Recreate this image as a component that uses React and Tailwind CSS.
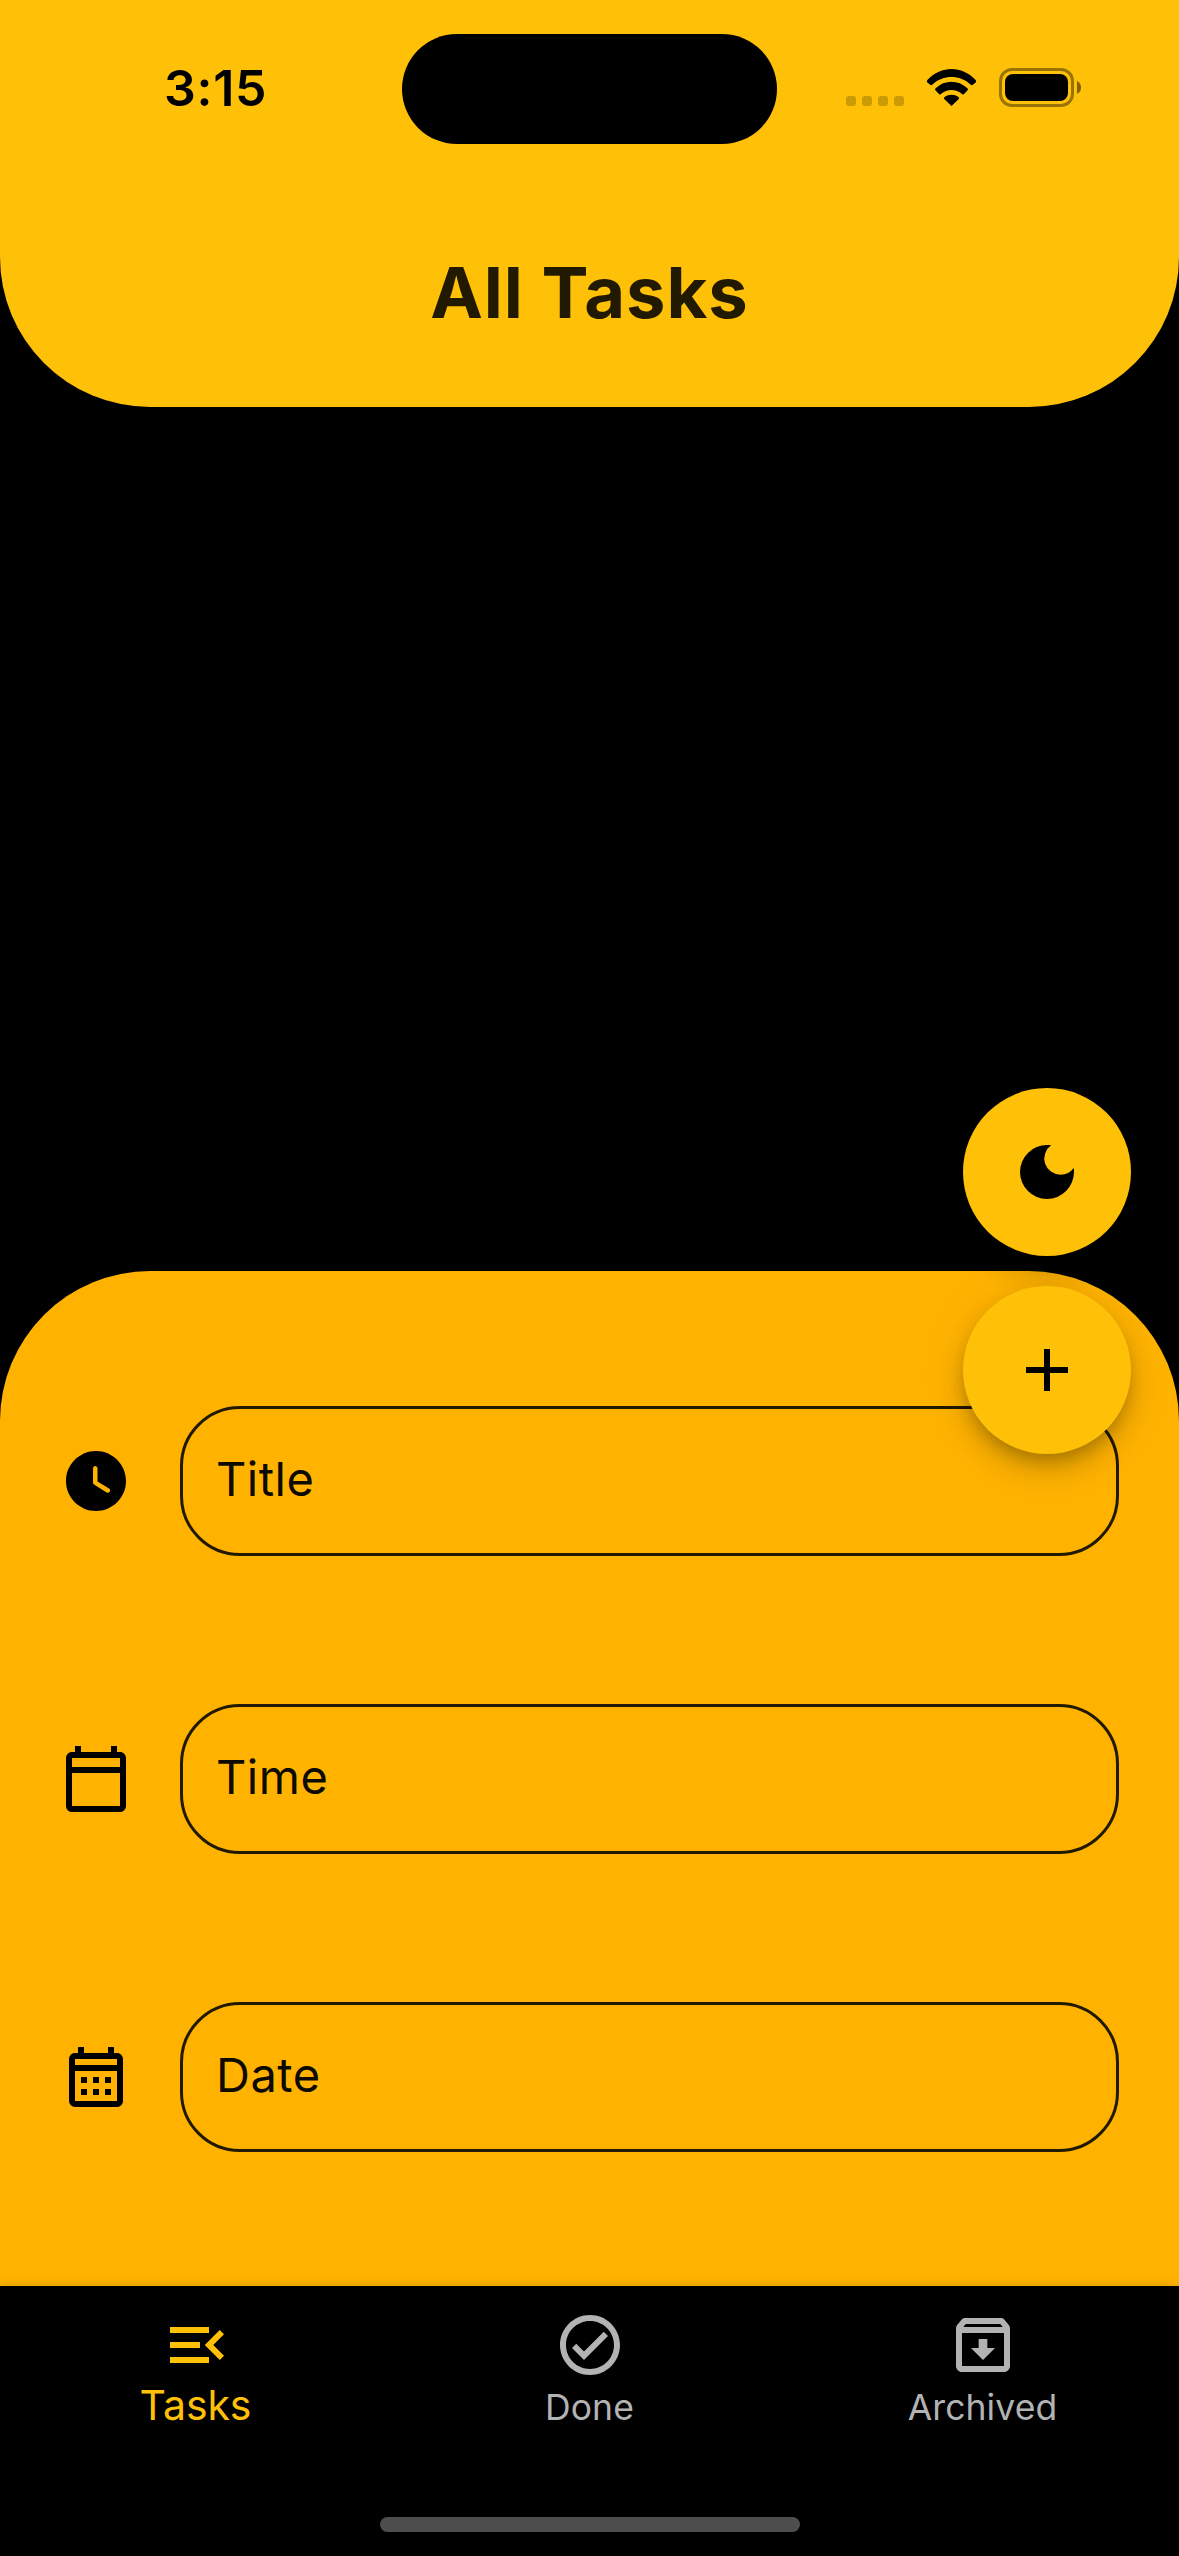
const ICONS = {
  moon: "M12 3a9 9 0 1 0 9 9c0-.46-.04-.92-.1-1.36a5.389 5.389 0 0 1-4.4 2.26 5.403 5.403 0 0 1-3.14-9.8c-.44-.06-.9-.1-1.36-.1z",
  add: "M19 13h-6v6h-2v-6H5v-2h6V5h2v6h6v2z",
  clock:
    "M12 2C6.5 2 2 6.5 2 12s4.5 10 10 10 10-4.5 10-10S17.5 2 12 2zm3.55 13.8l-4.08-2.51c-.3-.18-.48-.5-.48-.85V7.75c.01-.41.35-.75.76-.75s.75.34.75.75v4.45l3.84 2.31c.36.22.48.69.26 1.05-.22.35-.69.46-1.05.24z",
  today:
    "M20 3h-1V1h-2v2H7V1H5v2H4c-1.1 0-2 .9-2 2v16c0 1.1.9 2 2 2h16c1.1 0 2-.9 2-2V5c0-1.1-.9-2-2-2zm0 18H4V10h16v11zm0-13H4V5h16v3z",
  month:
    "M19 4h-1V2h-2v2H8V2H6v2H5c-1.11 0-1.99.9-1.99 2L3 20a2 2 0 0 0 2 2h14c1.1 0 2-.9 2-2V6c0-1.1-.9-2-2-2zm0 16H5V10h14v10zm0-12H5V6h14v2zM9 14H7v-2h2v2zm4 0h-2v-2h2v2zm4 0h-2v-2h2v2zm-8 4H7v-2h2v2zm4 0h-2v-2h2v2zm4 0h-2v-2h2v2z",
  tasks:
    "M3 18h13v-2H3v2zM3 13h10v-2H3v2zm0-7v2h13V6H3zm18 9.59L17.42 12 21 8.41 19.59 7l-5 5 5 5L21 15.59z",
  done:
    "M12 2C6.48 2 2 6.48 2 12s4.48 10 10 10 10-4.48 10-10S17.52 2 12 2zm0 18c-4.41 0-8-3.59-8-8s3.59-8 8-8 8 3.59 8 8-3.59 8-8 8zm4.59-12.42L10 14.17l-2.59-2.58L6 13l4 4 8-8z",
  archive:
    "M20.54 5.23l-1.39-1.68C18.88 3.21 18.47 3 18 3H6c-.47 0-.88.21-1.16.55L3.46 5.23C3.17 5.57 3 6.02 3 6.5V19c0 1.1.9 2 2 2h14c1.1 0 2-.9 2-2V6.5c0-.48-.17-.93-.46-1.27zM6.24 5h11.52l.83 1H5.42l.82-1zM5 19V8h14v11H5zm8.45-9h-2.9v3H8l4 4 4-4h-2.55z",
};

function Icon({ name }) {
  return (
    <svg viewBox="0 0 24 24" className="size-[72px] shrink-0 fill-current">
      <path d={ICONS[name]} />
    </svg>
  );
}

function WifiIcon() {
  return (
    <svg viewBox="0 0 51 37" className="ml-[22px] h-[37px] w-[51px]">
      <path d="M2 14Q0 12.4 1.6 10.8C15 -3.6 36 -3.6 49.4 10.8Q51 12.4 49 14L46.4 16Q45.6 16.5 44.8 15.7C34 5.4 17 5.4 6.2 15.7Q5.4 16.5 4.6 16Z" />
      <path d="M9.6 21.6Q8.4 20.4 9.6 19.2C18.6 10.6 32.4 10.6 41.4 19.2Q42.6 20.4 41.4 21.6L37.8 25.2Q36.8 25.8 36 25C29.8 19.6 21.2 19.6 15 25Q14.2 25.8 13.2 25.2Z" />
      <path d="M25.5 37L18.2 30Q17.4 28.9 18.6 28.1C22.8 25 28.2 25 32.4 28.1Q33.6 28.9 32.8 30Z" />
    </svg>
  );
}

function StatusBar() {
  return (
    <div className="flex h-[111px] items-center">
      <div className="mb-[3px] w-[402px] pl-[164px] text-[50px] leading-none font-semibold tracking-[0.7px] text-black">
        3:15
      </div>
      <div className="h-[110px] w-[375px] rounded-full bg-black" />
      <div className="mb-[3px] flex items-center pl-[69px]">
        <div className="mt-[26px] flex gap-[6px]">
          {[0, 1, 2, 3].map((i) => (
            <div key={i} className="size-[10px] rounded-[3px] bg-black/20" />
          ))}
        </div>
        <WifiIcon />
        <div className="ml-[22px] h-[39px] w-[75px] rounded-[13px] border-3 border-black/40 p-[3px]">
          <div className="h-[27px] w-[63px] rounded-[8px] bg-black" />
        </div>
        <svg viewBox="0 0 4 13" className="ml-[3px] h-[13px] w-[4px] fill-black/50">
          <path d="M0 0Q4 2 4 6.500Q4 11 0 13Z" />
        </svg>
      </div>
    </div>
  );
}

const FIELDS = [
  { label: "Title", icon: "clock" },
  { label: "Time", icon: "today" },
  { label: "Date", icon: "month" },
];

function Field({ label, icon }) {
  return (
    <div className="flex h-[150px] items-center pr-[60px] pl-[60px] text-black">
      <Icon name={icon} />
      <div className="ml-[48px] flex h-[150px] flex-1 items-center rounded-[60px] border-3 border-[#211900] pl-[33px] text-[47px] leading-none tracking-[0.5px] text-[#0d0a00]">
        <span className="mb-[5px]">{label}</span>
      </div>
    </div>
  );
}

function Fab({ icon }) {
  return (
    <button className="flex size-[168px] items-center justify-center rounded-full bg-[#FFC107] text-black shadow-[0_9px_15px_-3px_rgba(0,0,0,0.2),0_18px_30px_rgba(0,0,0,0.14),0_3px_48px_rgba(0,0,0,0.08)]">
      <Icon name={icon} />
    </button>
  );
}

function Tab({ icon, label, active }) {
  return (
    <div
      className={
        active
          ? "flex flex-1 flex-col items-center text-[#FFC107]"
          : "flex flex-1 flex-col items-center text-[#b3b3b3]"
      }
    >
      <Icon name={icon} />
      <span
        className={
          active
            ? "mt-[4px] mr-[2px] text-[41px] leading-[40px] tracking-[-0.1px]"
            : "mt-[9px] text-[35.5px] leading-[36px] tracking-[0.1px]"
        }
      >
        {label}
      </span>
    </div>
  );
}

export default function App() {
  return (
    <div
      className="relative flex h-[2556px] w-[1179px] flex-col overflow-hidden bg-black"
      style={{ fontFamily: 'Inter, "Liberation Sans", sans-serif' }}
    >
      <header className="h-[407px] rounded-b-[150px] bg-[#FFC107] pt-[33.5px]">
        <StatusBar />
        <h1 className="mt-[112.5px] text-center text-[70.5px] leading-[72px] font-bold tracking-[0.9px] text-[#211900]">
          All Tasks
        </h1>
      </header>

      <main className="mt-auto h-[1015px] rounded-t-[150px] bg-[#FFB300] pt-[134.6px]">
        <div className="flex flex-col gap-[148.2px]">
          {FIELDS.map((f) => (
            <Field key={f.label} {...f} />
          ))}
        </div>
      </main>

      <nav className="relative flex h-[270px] shrink-0 flex-col items-center bg-black shadow-[0_0_10px_rgba(0,0,0,0.15)]">
        <div className="flex w-full pt-[23px]">
          <Tab icon="tasks" label="Tasks" active />
          <Tab icon="done" label="Done" />
          <Tab icon="archive" label="Archived" />
        </div>
        <div className="mt-auto mb-[24px] h-[15px] w-[420px] rounded-full bg-[#4d4d4d]" />
      </nav>

      <div className="absolute top-[1088px] right-[48px] flex flex-col gap-[30px]">
        <Fab icon="moon" />
        <Fab icon="add" />
      </div>
    </div>
  );
}
